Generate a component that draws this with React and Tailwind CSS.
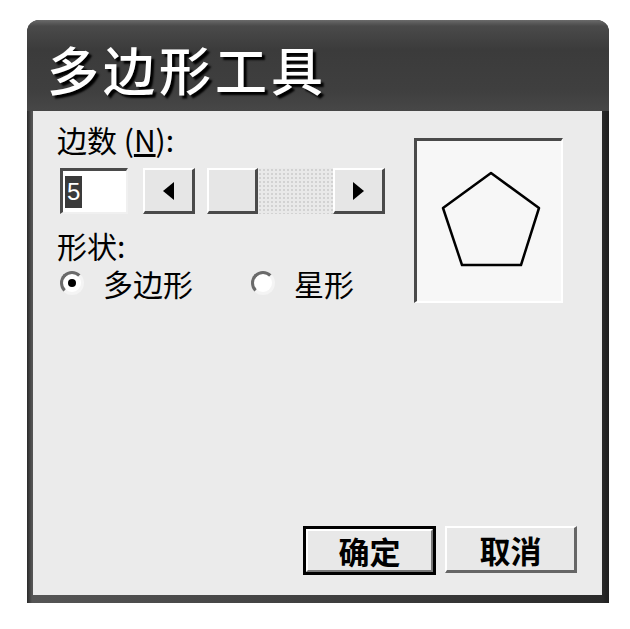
import React from "react";

const cjk = { fontFamily: '"Noto Sans CJK SC", "Liberation Sans", sans-serif' };

function ArrowBtn({ dir }) {
  return (
    <div className="w-[52px] h-[46px] bg-[#e6e6e6] border-t-2 border-l-2 border-t-white border-l-white border-b-[3px] border-r-[3px] border-b-[#4a4a4a] border-r-[#4a4a4a] flex items-center justify-center">
      <svg width="13" height="20" viewBox="0 0 13 20">
        {dir === "left" ? (
          <polygon points="12,1 12,19 1,10" fill="#000" />
        ) : (
          <polygon points="1,1 1,19 12,10" fill="#000" />
        )}
      </svg>
    </div>
  );
}

function Radio({ checked, label, className }) {
  return (
    <div className={"flex items-center h-[30px] " + (className || "")}>
      <div className="w-[24px] h-[24px] rounded-full border-[3px] border-t-[#6a6a6a] border-l-[#6a6a6a] border-b-[#f4f4f4] border-r-[#f4f4f4] bg-white flex items-center justify-center">
        {checked && <div className="w-[8px] h-[8px] rounded-full bg-black" />}
      </div>
      <span className="ml-[19px] text-[30px] leading-[30px] text-black" style={cjk}>
        {label}
      </span>
    </div>
  );
}

export default function App() {
  return (
    <div className="w-[630px] h-[629px] bg-white pt-[20px] pl-[27px]">
      <div className="w-[582px] h-[583px] rounded-t-[12px] bg-[#2e2e2e] flex flex-col overflow-hidden">
        {/* Title bar */}
        <div className="h-[91px] shrink-0 bg-[linear-gradient(to_bottom,#6a6a6a_0px,#4a4a4a_6px,#3b3b3b_30px,#3f3f3f_70px,#474747_91px)] flex items-center pl-[20px]">
          <span
            className="text-white text-[52px] leading-none tracking-[4px] font-medium mt-[6px] [text-shadow:3px_3px_2px_#000]"
            style={cjk}
          >
            多边形工具
          </span>
        </div>
        {/* Body */}
        <div className="flex-1 flex pl-[6px] pr-[7px] pb-[8px] bg-[linear-gradient(to_right,#2a2a2a_0px,#555_5px,#2a2a2a_575px,#1f1f1f_582px)]">
          <div className="flex-1 bg-[#ebebeb] flex flex-col">
            <div className="flex">
              <div className="flex-1 flex flex-col pl-[24px] pt-[10px]">
                <div className="h-[36px] leading-[36px] text-[30px] text-black" style={cjk}>
                  边数 (<span className="underline underline-offset-2">N</span>):
                </div>
                <div className="flex items-start mt-[11px] ml-[3px] h-[46px]">
                  <div className="w-[68px] h-[46px] bg-white border-t-[3px] border-l-[3px] border-t-[#4a4a4a] border-l-[#4a4a4a] border-b-2 border-r-2 border-b-[#f0f0f0] border-r-[#f0f0f0] flex items-center pl-[2px]">
                    <span
                      className="bg-[#3a3a3a] text-white text-[24px] leading-[32px] px-[2px]"
                      style={{ fontFamily: '"Liberation Sans", sans-serif' }}
                    >
                      5
                    </span>
                  </div>
                  <div className="ml-[15px]">
                    <ArrowBtn dir="left" />
                  </div>
                  <div className="ml-[12px] w-[51px] h-[46px] bg-[#e6e6e6] border-t-2 border-l-2 border-t-white border-l-white border-b-[3px] border-r-[3px] border-b-[#4a4a4a] border-r-[#4a4a4a]" />
                  <div className="w-[75px] h-[46px] bg-[#e9e9e9] bg-[radial-gradient(#d2d2d2_1px,transparent_1px)] bg-[length:4px_4px]" />
                  <ArrowBtn dir="right" />
                </div>
                <div className="mt-[13px] h-[36px] leading-[36px] text-[30px] text-black" style={cjk}>
                  形状:
                </div>
                <div className="flex mt-[5px] ml-[3px]">
                  <Radio checked label="多边形" />
                  <Radio label="星形" className="ml-[58px]" />
                </div>
              </div>
              <div className="mt-[27px] mr-[39px] w-[149px] h-[165px] bg-[#f7f7f7] border-t-[3px] border-l-[3px] border-t-[#4a4a4a] border-l-[#4a4a4a] border-b-2 border-r-2 border-b-white border-r-white">
                <svg width="144" height="160" viewBox="0 0 144 160">
                  <polygon
                    points="74,32 122,67 104,124 45,124 26,67"
                    fill="none"
                    stroke="#000"
                    strokeWidth="2.5"
                    strokeLinejoin="round"
                  />
                </svg>
              </div>
            </div>
            <div className="mt-auto flex justify-end items-start pr-[25px] pb-[20px] gap-[9px]">
              <div className="w-[133px] h-[49px] border-[3px] border-black bg-[#e8e8e8] flex">
                <div className="flex-1 border-t-2 border-l-2 border-t-white border-l-white border-b-2 border-r-2 border-b-[#777] border-r-[#777] flex items-center justify-center">
                  <span className="text-[31px] leading-none font-semibold text-black" style={cjk}>
                    确定
                  </span>
                </div>
              </div>
              <div className="w-[132px] h-[47px] bg-[#e8e8e8] border-t-2 border-l-2 border-t-white border-l-white border-b-[3px] border-r-[3px] border-b-[#666] border-r-[#666] flex items-center justify-center">
                <span className="text-[31px] leading-none font-semibold text-black" style={cjk}>
                  取消
                </span>
              </div>
            </div>
          </div>
        </div>
      </div>
    </div>
  );
}
